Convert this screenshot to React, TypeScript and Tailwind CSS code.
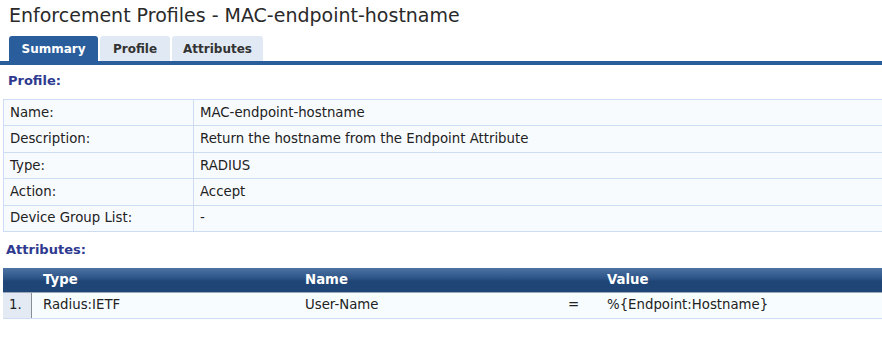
import React from "react";

const rows: [string, string][] = [
  ["Name:", "MAC-endpoint-hostname"],
  ["Description:", "Return the hostname from the Endpoint Attribute"],
  ["Type:", "RADIUS"],
  ["Action:", "Accept"],
  ["Device Group List:", "-"],
];

export default function App() {
  return (
    <div
      className="w-[882px] h-[337px] bg-white text-[#222] overflow-hidden"
      style={{ fontFamily: '"DejaVu Sans", Verdana, sans-serif' }}
    >
      <h1 className="pl-[9px] pt-[2px] h-[36px] text-[19px] leading-[26px] text-[#2a2a2a]">
        Enforcement Profiles - MAC-endpoint-hostname
      </h1>
      <div className="flex items-end gap-[2px] pl-[9px] h-[25px] border-b-[4px] border-[#2a5d9c] box-content">
        <div className="w-[89px] h-[25px] rounded-t-[3px] bg-[#2a5d9c] text-white text-[12px] font-bold flex items-center justify-center">
          Summary
        </div>
        <div className="w-[70px] h-[25px] rounded-t-[3px] bg-[#e1e9f4] text-[#333] text-[12px] font-bold flex items-center justify-center">
          Profile
        </div>
        <div className="w-[91px] h-[25px] rounded-t-[3px] bg-[#e1e9f4] text-[#333] text-[12px] font-bold flex items-center justify-center">
          Attributes
        </div>
      </div>
      <div className="pl-[8px] pt-[8px] h-[34px] text-[13px] font-bold text-[#2e3a8f] leading-[16px]">
        Profile:
      </div>
      <div className="ml-[3px] border-t border-l border-[#cddcf2] text-[13.3px]">
        {rows.map(([k, v]) => (
          <div key={k} className="flex h-[26.4px] border-b border-[#cddcf2] bg-[#f8fbfe]">
            <div className="w-[190px] pl-[6px] flex items-center border-r border-[#cddcf2]">{k}</div>
            <div className="flex-1 pl-[6px] flex items-center">{v}</div>
          </div>
        ))}
      </div>
      <div className="pl-[6px] pt-[10px] h-[36px] text-[13px] font-bold text-[#2e3a8f] leading-[16px]">
        Attributes:
      </div>
      <div className="ml-[3px] text-[13.3px]">
        <div className="flex h-[25px] bg-[linear-gradient(to_bottom,#4d73a4_0%,#2a5284_45%,#1f4577_55%,#1f4577_100%)] border-b border-[#9aa7b8] text-white font-bold items-center">
          <div className="w-[40px]" />
          <div className="w-[262px]">Type</div>
          <div className="w-[302px]">Name</div>
          <div className="flex-1">Value</div>
        </div>
        <div className="flex h-[26px] bg-[#f7fdff] border-b border-[#cddcf2] items-center">
          <div className="w-[29px] h-full bg-[#e4eaf3] border-r border-[#8a8f96] flex items-center pl-[6px]">1.</div>
          <div className="w-[273px] pl-[11px]">Radius:IETF</div>
          <div className="w-[263px]">User-Name</div>
          <div className="w-[39px]">=</div>
          <div className="flex-1">%{"{"}Endpoint:Hostname{"}"}</div>
        </div>
      </div>
    </div>
  );
}
